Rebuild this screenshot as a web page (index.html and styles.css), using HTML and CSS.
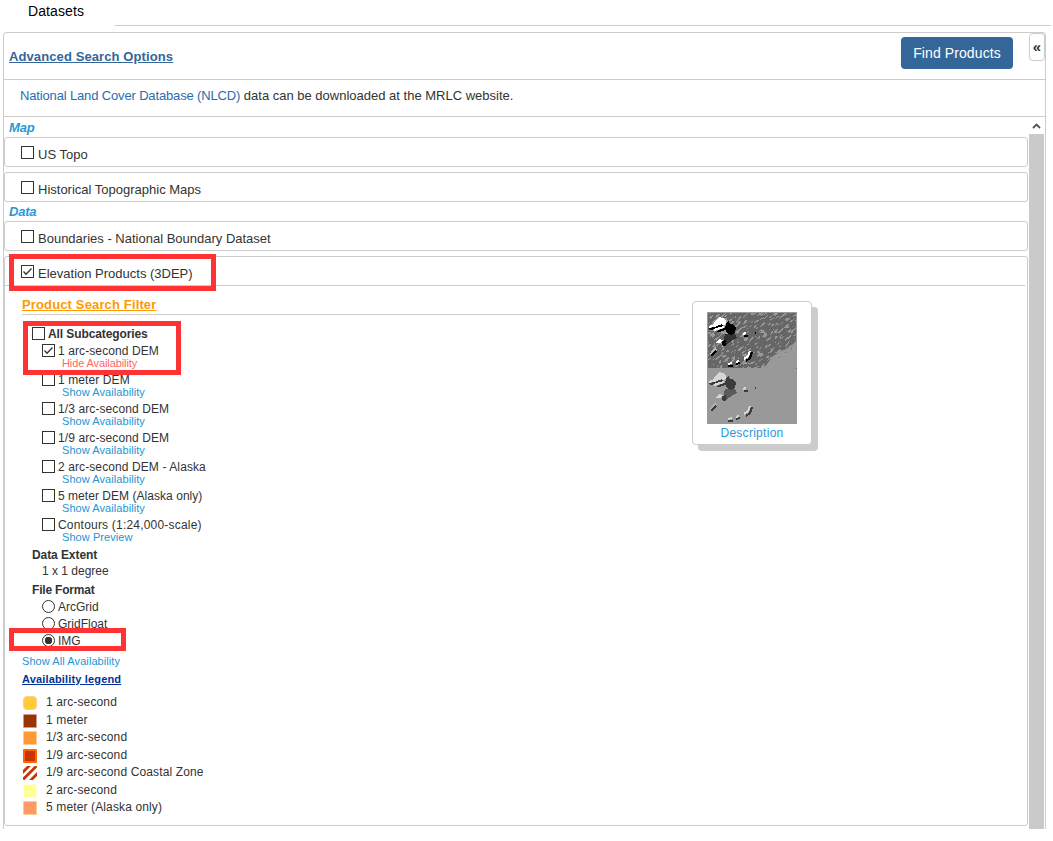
FILE: index.html
```
<!DOCTYPE html>
<html lang="en">
<head>
<meta charset="utf-8">
<title>Datasets</title>
<link rel="stylesheet" href="styles.css">
</head>
<body>
<header class="tabs"><span class="tab">Datasets</span><span class="tab-line"></span></header>
<main class="panel">
  <div class="toolbar">
    <a class="advanced">Advanced Search Options</a>
    <button class="find">Find Products</button>
    <button class="collapse">«</button>
  </div>
  <p class="notice"><a>National Land Cover Database (NLCD)</a> data can be downloaded at the MRLC website.</p>
  <div class="scroller">
    <div class="list">
      <h2 class="group">Map</h2>
      <section class="item"><i class="check"></i><span>US Topo</span></section>
      <section class="item"><i class="check"></i><span>Historical Topographic Maps</span></section>
      <h2 class="group data">Data</h2>
      <section class="item"><i class="check"></i><span>Boundaries - National Boundary Dataset</span></section>
      <section class="item open">
        <div class="item-head"><i class="check"><svg viewBox="0 0 13 13"><path d="M2.5 6.5 5 9.2 10.5 3.5"/></svg></i><span>Elevation Products (3DEP)</span></div>
        <div class="item-body">
          <div class="filter">
            <h3 class="filter-title"><span>Product Search Filter</span></h3>
            <div class="opt all"><i class="check"></i><b>All Subcategories</b></div>
            <div class="opt sub"><i class="check"><svg viewBox="0 0 13 13"><path d="M2.5 6.5 5 9.2 10.5 3.5"/></svg></i><span>1 arc-second DEM</span></div>
            <a class="avail hide">Hide Availability</a>
            <div class="opt sub"><i class="check"></i><span>1 meter DEM</span></div>
            <a class="avail">Show Availability</a>
            <div class="opt sub"><i class="check"></i><span>1/3 arc-second DEM</span></div>
            <a class="avail">Show Availability</a>
            <div class="opt sub"><i class="check"></i><span>1/9 arc-second DEM</span></div>
            <a class="avail">Show Availability</a>
            <div class="opt sub"><i class="check"></i><span>2 arc-second DEM - Alaska</span></div>
            <a class="avail">Show Availability</a>
            <div class="opt sub tight"><i class="check"></i><span>5 meter DEM (Alaska only)</span></div>
            <a class="avail">Show Availability</a>
            <div class="opt sub wide"><i class="check"></i><span>Contours (1:24,000-scale)</span></div>
            <a class="avail">Show Preview</a>
            <h4 class="sub-title">Data Extent</h4>
            <div class="extent">1 x 1 degree</div>
            <h4 class="sub-title format">File Format</h4>
            <div class="opt radio-row"><i class="radio"></i><span>ArcGrid</span></div>
            <div class="opt radio-row"><i class="radio"></i><span>GridFloat</span></div>
            <div class="opt radio-row"><i class="radio on"></i><span>IMG</span></div>
            <a class="show-all">Show All Availability</a>
            <a class="legend-title">Availability legend</a>
            <ul class="legend">
              <li><i class="swatch s1"></i>1 arc-second</li>
              <li><i class="swatch s2"></i>1 meter</li>
              <li><i class="swatch s3"></i>1/3 arc-second</li>
              <li><i class="swatch s4"></i>1/9 arc-second</li>
              <li><svg class="swatch" viewBox="0 0 14 14"><g stroke="#cc3300" stroke-width="2.8"><path d="M-1 7 7-1M-1 14.500 14.500-1M7 15 15 7"/></g></svg>1/9 arc-second Coastal Zone</li>
              <li><i class="swatch s6"></i>2 arc-second</li>
              <li><i class="swatch s7"></i>5 meter (Alaska only)</li>
            </ul>
          </div>
          <figure class="card">
            <svg class="dem" width="90" height="112" viewBox="0 0 90 112" shape-rendering="crispEdges">
              <defs>
                <filter id="grain" x="0" y="0" width="1" height="1" color-interpolation-filters="sRGB">
                  <feTurbulence type="fractalNoise" baseFrequency=".18 .6" numOctaves="2" seed="8"/>
                  <feColorMatrix values="0 0 0 0 .6  0 0 0 0 .6  0 0 0 0 .6  24 0 0 0 -13.4"/>
                </filter>
                <clipPath id="land"><path d="M1 1H89V29L82 36 74 39 66 44 57 56H1Z"/></clipPath>
                <g id="hills">
                  <path fill="#999" d="M3 15 6 9 12 5 20 6 21 10 26 15 21 23 15 22 9 19 3 19Z"/>
                  <path fill="#fff" d="M7 10 12 5 18 7 20 12 15 13 13 17 7 15ZM8 31 12 27 16 28 14 31Z"/>
                  <path fill="#bbb" d="M3 43 4 39 9 35 10 38 6 43Z"/>
                  <path class="shade" d="M18 22 28 22 30 26 21 31 18 35 16 31Z"/>
                  <path class="black" d="M20 10 22 9 23 12 26 12 29 16 28 21 24 23 19 20 18 16ZM15 29 19 28 19 32 17 34 15 33ZM2 16 8 15 15 12 16 14 8 17 3 18ZM9 20 14 17 18 16 18 18 12 20Z"/>
                  <path stroke="#fff" stroke-width="2" fill="none" d="M2 15 8 13 15 11M7 18 13 16 17 15M36 22 39 21M37 47 41 44 43 39M21 52 25 51M29 50 32 49"/>
                  <path class="black-line" stroke-width="2" fill="none" d="M4 44 9 39M37 24 41 24M39 49 43 46 45 40M21 54 26 54M29 52 33 51M48 21 49 21"/>
                </g>
              </defs>
              <path fill="#999" d="M0 0H90V112H0Z"/>
              <g clip-path="url(#land)"><path fill="#666" d="M0 0H90V57H0Z"/><g transform="rotate(-42 45 28)"><path filter="url(#grain)" d="M-20-40H110V100H-20Z"/></g></g>
              <path fill="#666" d="M78 40h1v1h-1ZM84 36h1v1h-1ZM72 45h1v1h-1ZM89 56h1v1h-1Z"/>
              <use href="#hills"/>
              <use href="#hills" y="55" opacity=".6"/>
            </svg>
            <figcaption>Description</figcaption>
          </figure>
        </div>
      </section>
    </div>
    <div class="scrollbar"><svg viewBox="0 0 15 17"><path d="M4 11 7.500 7.500 11 11"/></svg><i class="thumb"></i></div>
  </div>
</main>
<div class="mark mark-product"></div>
<div class="mark mark-category"></div>
<div class="mark mark-format"></div>
</body>
</html>
```
FILE: styles.css
```
* { box-sizing: border-box; }
body { margin: 0; width: 1053px; height: 841px; overflow: hidden; position: relative; background: #fff; color: #333; font-family: "Liberation Sans", Arial, sans-serif; font-size: 13px; }
h2, h3, h4, p, ul, figure { margin: 0; padding: 0; }
button { font-family: inherit; padding: 0; }
.tabs { height: 32px; display: flex; padding-left: 28px; color: #000; font-size: 14px; letter-spacing: .1px; line-height: 23px; }
.tab { width: 87px; }
.tab-line { width: 936px; height: 26px; border-bottom: 1px solid #ccc; }
.panel { width: 1043px; height: 797px; margin-left: 3px; border: 1px solid #ccc; border-bottom: 0; border-radius: 4px 4px 0 0; }
.toolbar { display: flex; height: 47px; padding-left: 5px; border-bottom: 1px solid #ccc; }
.advanced { flex: 1; color: #369; font-size: 13px; font-weight: bold; letter-spacing: .1px; line-height: 48px; text-decoration: underline; }
.find { width: 112px; height: 32px; margin: 4px 16px 0 0; border: 0; border-radius: 4px; background: #369; color: #fff; font-size: 14px; letter-spacing: .1px; }
.collapse { width: 16px; height: 28px; border: 1px solid #ccc; border-radius: 4px; background: #fff; color: #333; font-size: 15px; font-weight: bold; line-height: 24px; }
.notice { height: 37px; padding-left: 16px; border-bottom: 1px solid #ccc; line-height: 31px; }
.notice a { color: #2a6cae; letter-spacing: -.15px; }
.scroller { display: flex; height: 712px; }
.list { width: 1025px; }
.group { height: 20px; padding-left: 5px; color: #2a98d6; font-size: 13px; font-style: italic; letter-spacing: -.2px; line-height: 22px; }
.group.data { margin-top: -6px; line-height: 21px; }
.item { display: flex; width: 1024px; height: 30px; margin-bottom: 5px; padding: 8px 0 0 16px; border: 1px solid #ccc; border-radius: 3px; }
.item > span, .item-head > span { margin-left: 4px; line-height: 18px; }
.check { flex: none; width: 13px; height: 13px; border: 1px solid #333; background: #fff; }
.check svg { display: block; width: 13px; height: 13px; margin: -1px; fill: none; stroke: #333; stroke-width: 1.3; }
.item.open { display: block; height: 570px; padding: 0; }
.item-head { display: flex; width: 1020px; height: 29px; padding: 8px 0 0 16px; border-bottom: 1px solid #ccc; }
.item-body { display: flex; padding-left: 17px; }
.filter { width: 658px; font-size: 12px; }
.filter-title { height: 29px; border-bottom: 1px solid #ccc; color: #f90; font-size: 13px; letter-spacing: .14px; line-height: 38px; text-decoration: underline; }
.opt { display: flex; height: 17px; letter-spacing: .1px; line-height: 14px; }
.opt > :last-child { margin-left: 3px; }
.opt.all { margin: 12px 0 0 10px; letter-spacing: -.1px; }
.opt.sub { height: 16px; margin-left: 20px; }
.opt.tight { letter-spacing: .04px; }
.opt.wide { letter-spacing: .2px; }
.avail { display: block; height: 13px; padding-left: 40px; color: #2396d3; font-size: 11px; letter-spacing: .07px; line-height: 6px; }
.avail.hide { color: #f66; letter-spacing: -.1px; }
.sub-title { height: 17px; margin-left: 10px; font-size: 12px; letter-spacing: -.08px; line-height: 17px; }
.sub-title.format { height: 18px; margin-top: 2px; letter-spacing: -.2px; }
.extent { height: 16px; padding-left: 20px; line-height: 14px; }
.opt.radio-row { margin-left: 20px; letter-spacing: 0; }
.radio { width: 13px; height: 13px; border: 1px solid #333; border-radius: 50%; background: #fff; }
.radio.on { background: radial-gradient(circle, #333 0 3.5px, #fff 4px); }
.show-all { display: block; height: 18px; margin-top: 1px; color: #2396d3; font-size: 11px; letter-spacing: .08px; line-height: 18px; }
.legend-title { display: block; height: 18px; color: #039; font-size: 11px; font-weight: bold; letter-spacing: .16px; line-height: 18px; text-decoration: underline; }
.legend { margin-top: 6px; letter-spacing: .13px; list-style: none; }
.legend li { display: flex; height: 17.5px; line-height: 17px; }
.swatch { width: 14px; height: 14px; margin: 2px 9px 0 1px; border: 1px solid #ccc; border-radius: 1px; }
svg.swatch { border: 0; }
.s1 { border-color: #fc9; border-radius: 4px; background: #fc3; }
.s2 { border-color: #c99; background: #930; }
.s3 { border-color: #fc9; background: #f93; }
.s4 { border: 2px solid #f60; background: #c30; }
.s6 { border-color: #ffc; background: #ff9; }
.s7 { border-color: #fc9; background: #f96; }
.card { width: 120px; height: 144px; margin: 15px 0 0 12px; padding: 10px 0 0 14px; border: 1px solid #ccc; border-radius: 4px; background: #fff; box-shadow: 6px 6px 0 #ccc; }
.dem { display: block; }
.black { fill: #000; }
.shade { fill: #333; }
.black-line { stroke: #000; }
.card figcaption { width: 90px; color: #2a98e0; font-size: 12px; letter-spacing: .28px; line-height: 18px; text-align: center; }
.scrollbar { width: 15px; height: 712px; }
.scrollbar svg { display: block; width: 15px; height: 17px; fill: none; stroke: #555; stroke-width: 1.8; }
.thumb { display: block; height: 695px; background: #cacaca; }
.mark { position: absolute; border: 5px solid #f33; }
.mark-product { left: 9px; top: 254px; width: 207px; height: 37px; }
.mark-category { left: 23px; top: 321px; width: 158px; height: 54px; }
.mark-format { left: 9px; top: 628px; width: 117px; height: 23px; }
```
